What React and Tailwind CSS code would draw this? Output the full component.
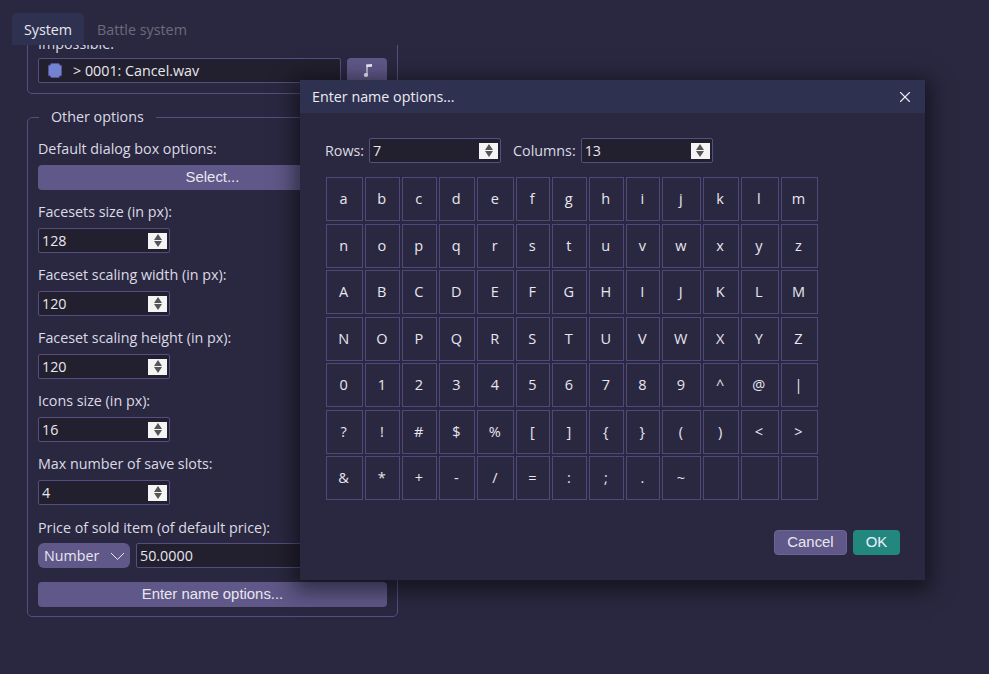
import { X } from 'lucide-react'

const uiFont = "[font-family:'Open_Sans','Noto_Sans',sans-serif]"

const KEYS = [
  ['a', 'b', 'c', 'd', 'e', 'f', 'g', 'h', 'i', 'j', 'k', 'l', 'm'],
  ['n', 'o', 'p', 'q', 'r', 's', 't', 'u', 'v', 'w', 'x', 'y', 'z'],
  ['A', 'B', 'C', 'D', 'E', 'F', 'G', 'H', 'I', 'J', 'K', 'L', 'M'],
  ['N', 'O', 'P', 'Q', 'R', 'S', 'T', 'U', 'V', 'W', 'X', 'Y', 'Z'],
  ['0', '1', '2', '3', '4', '5', '6', '7', '8', '9', '^', '@', '|'],
  ['?', '!', '#', '$', '%', '[', ']', '{', '}', '(', ')', '<', '>'],
  ['&', '*', '+', '-', '/', '=', ':', ';', '.', '~', '', '', ''],
]

const NUMBER_FIELDS = [
  ['Facesets size (in px):', '128'],
  ['Faceset scaling width (in px):', '120'],
  ['Faceset scaling height (in px):', '120'],
  ['Icons size (in px):', '16'],
  ['Max number of save slots:', '4'],
]

function Spinner() {
  return (
    <div className="ml-auto flex h-4 w-[19px] shrink-0 flex-col items-center justify-center gap-[1px] bg-[#f4f4f4]">
      <svg width="8" height="6" viewBox="0 0 8 6"><path d="M4 0 8 6H0z" fill="#555" /></svg>
      <svg width="8" height="6" viewBox="0 0 8 6"><path d="M0 0h8L4 6z" fill="#555" /></svg>
    </div>
  )
}

function NumberInput({ value, className }) {
  return (
    <div className={`flex h-[25px] items-center rounded-[2px] border border-[#564d80] bg-[#221f2e] pl-[3px] pr-[2px] text-[14.3px] text-[#e8e6ef] ${className}`}>
      <span>{value}</span>
      <Spinner />
    </div>
  )
}

function PurpleButton({ children, className }) {
  return (
    <button className={`rounded-[4px] bg-[#5f5888] text-center text-[14.9px] text-[#e8e6ef] [font-family:'Liberation_Sans',Arial,sans-serif] ${className}`}>
      {children}
    </button>
  )
}

function NameDialog() {
  return (
    <div className="absolute left-[300px] top-[80px] flex h-[500px] w-[625px] flex-col bg-[#2a2840] shadow-[0_5px_20px_6px_rgba(0,0,0,0.5)]">
      <div className="flex h-[33px] shrink-0 items-center justify-between bg-[#2e3250] pl-3 pr-[11px] text-[14.3px] text-[#eceaf2]">
        <span>Enter name options...</span>
        <X size={18} strokeWidth={1.5} />
      </div>
      <div className="flex items-center pl-[25px] pt-[25px] text-[14.3px] text-[#dcdae4]">
        <span className="mr-[5px]">Rows:</span>
        <NumberInput value="7" className="w-[132px]" />
        <span className="ml-[12px] mr-[5px]">Columns:</span>
        <NumberInput value="13" className="w-[132px]" />
      </div>
      <div className="ml-[26px] mt-[14px] grid grid-cols-[37.3px_35px_35px_36px_37px_34px_35px_35px_34px_39px_35.7px_37.7px_37.7px] auto-rows-[44px] gap-x-[2px] gap-y-[2.5px]">
        {KEYS.flat().map((key, i) => (
          <div key={i} className="flex items-center justify-center border border-[#504878] pr-[2px] text-[14.5px] text-[#e8e6ef]">
            {key}
          </div>
        ))}
      </div>
      <div className="mt-[30px] flex justify-end gap-[6px] pr-[25px]">
        <PurpleButton className="h-[25px] w-[73px] border border-[#6b6494]">Cancel</PurpleButton>
        <button className="h-[25px] w-[47px] rounded-[4px] bg-[#22877f] text-[14.9px] text-[#eef] [font-family:'Liberation_Sans',Arial,sans-serif]">OK</button>
      </div>
    </div>
  )
}

export default function App() {
  return (
    <div className={`relative h-[674px] w-[989px] overflow-hidden bg-[#2a2840] ${uiFont}`}>
      <div className="flex h-[45px] items-end pl-3">
        <div className="flex h-[32px] w-[72px] items-center justify-center rounded-t-[5px] bg-[#2e3250] pt-[2px] text-[14.3px] text-[#e8e6ef]">System</div>
        <div className="flex h-[32px] items-center pl-[13px] pt-[2px] text-[14.3px] text-[#6d6a7c]">Battle system</div>
      </div>

      <div className="h-[629px] overflow-hidden">
        <div className="-mt-[13px] ml-[27px] w-[371px]">
          <div className="rounded-b-[5px] border border-[#564d80] px-[10px] pb-[10px]">
            <div className="h-[21px] text-[14.3px] leading-[21px] text-[#dcdae4]">Impossible:</div>
            <div className="mt-[4px] flex gap-[6px]">
              <div className="flex h-[25px] flex-1 items-center rounded-[2px] border border-[#564d80] bg-[#221f2e] pl-[9px] text-[14.3px] text-[#e8e6ef]">
                <svg width="14" height="15" viewBox="0 0 14 15" className="mr-[11px]">
                  <path d="M3 .5h8v1h1v1h1.500v10H12v1h-1v1H3v-1H2v-1H.5v-10H2v-1h1z" fill="#7283d0" stroke="#5a4fa0" strokeWidth="1" />
                </svg>
                <span>&gt; 0001: Cancel.wav</span>
              </div>
              <PurpleButton className="flex h-[25px] w-[40px] items-center justify-center">
                <svg width="12" height="15" viewBox="0 0 12 15">
                  <path d="M6 1.500v10" stroke="#f0eef6" strokeWidth="1.200" fill="none" />
                  <path d="M5.500 1.500 11 1v2.800L5.500 4z" fill="#f0eef6" />
                  <ellipse cx="5" cy="12" rx="2.200" ry="2" fill="#f0eef6" />
                </svg>
              </PurpleButton>
            </div>
          </div>

          <fieldset className="mt-[13px] h-[510px] rounded-[5px] border border-[#564d80] px-[10px] pb-2">
            <legend className="ml-[1px] px-3 text-[14.3px] leading-[20px] text-[#dcdae4]">Other options</legend>
            <div className="mt-[12px] text-[14.3px] leading-[20px] text-[#dcdae4]">Default dialog box options:</div>
            <PurpleButton className="mt-[6px] h-[25px] w-full">Select...</PurpleButton>
            {NUMBER_FIELDS.map(([label, value]) => (
              <div key={label} className="mt-[12px]">
                <div className="text-[14.3px] leading-[20px] text-[#dcdae4]">{label}</div>
                <NumberInput value={value} className="mt-[6px] w-[132px]" />
              </div>
            ))}
            <div className="mt-[13px] text-[14.3px] leading-[20px] text-[#dcdae4]">Price of sold item (of default price):</div>
            <div className="mt-[5px] flex gap-[6px]">
              <div className="flex h-[25px] w-[92px] items-center justify-between rounded-[6px] bg-[#5f5888] pl-[6px] pr-[5px] text-[14.3px] text-[#e8e6ef]">
                <span>Number</span>
                <svg width="15" height="8" viewBox="0 0 15 8" fill="none" stroke="#e8e6ef" strokeWidth="1">
                  <path d="M1 1l6.500 6.500L14 1" />
                </svg>
              </div>
              <div className="flex h-[25px] flex-1 items-center rounded-[2px] border border-[#564d80] bg-[#221f2e] pl-[3px] text-[14.3px] text-[#e8e6ef]">50.0000</div>
            </div>
            <PurpleButton className="mt-[14px] h-[25px] w-full">Enter name options...</PurpleButton>
          </fieldset>
        </div>
      </div>

      <NameDialog />
    </div>
  )
}
